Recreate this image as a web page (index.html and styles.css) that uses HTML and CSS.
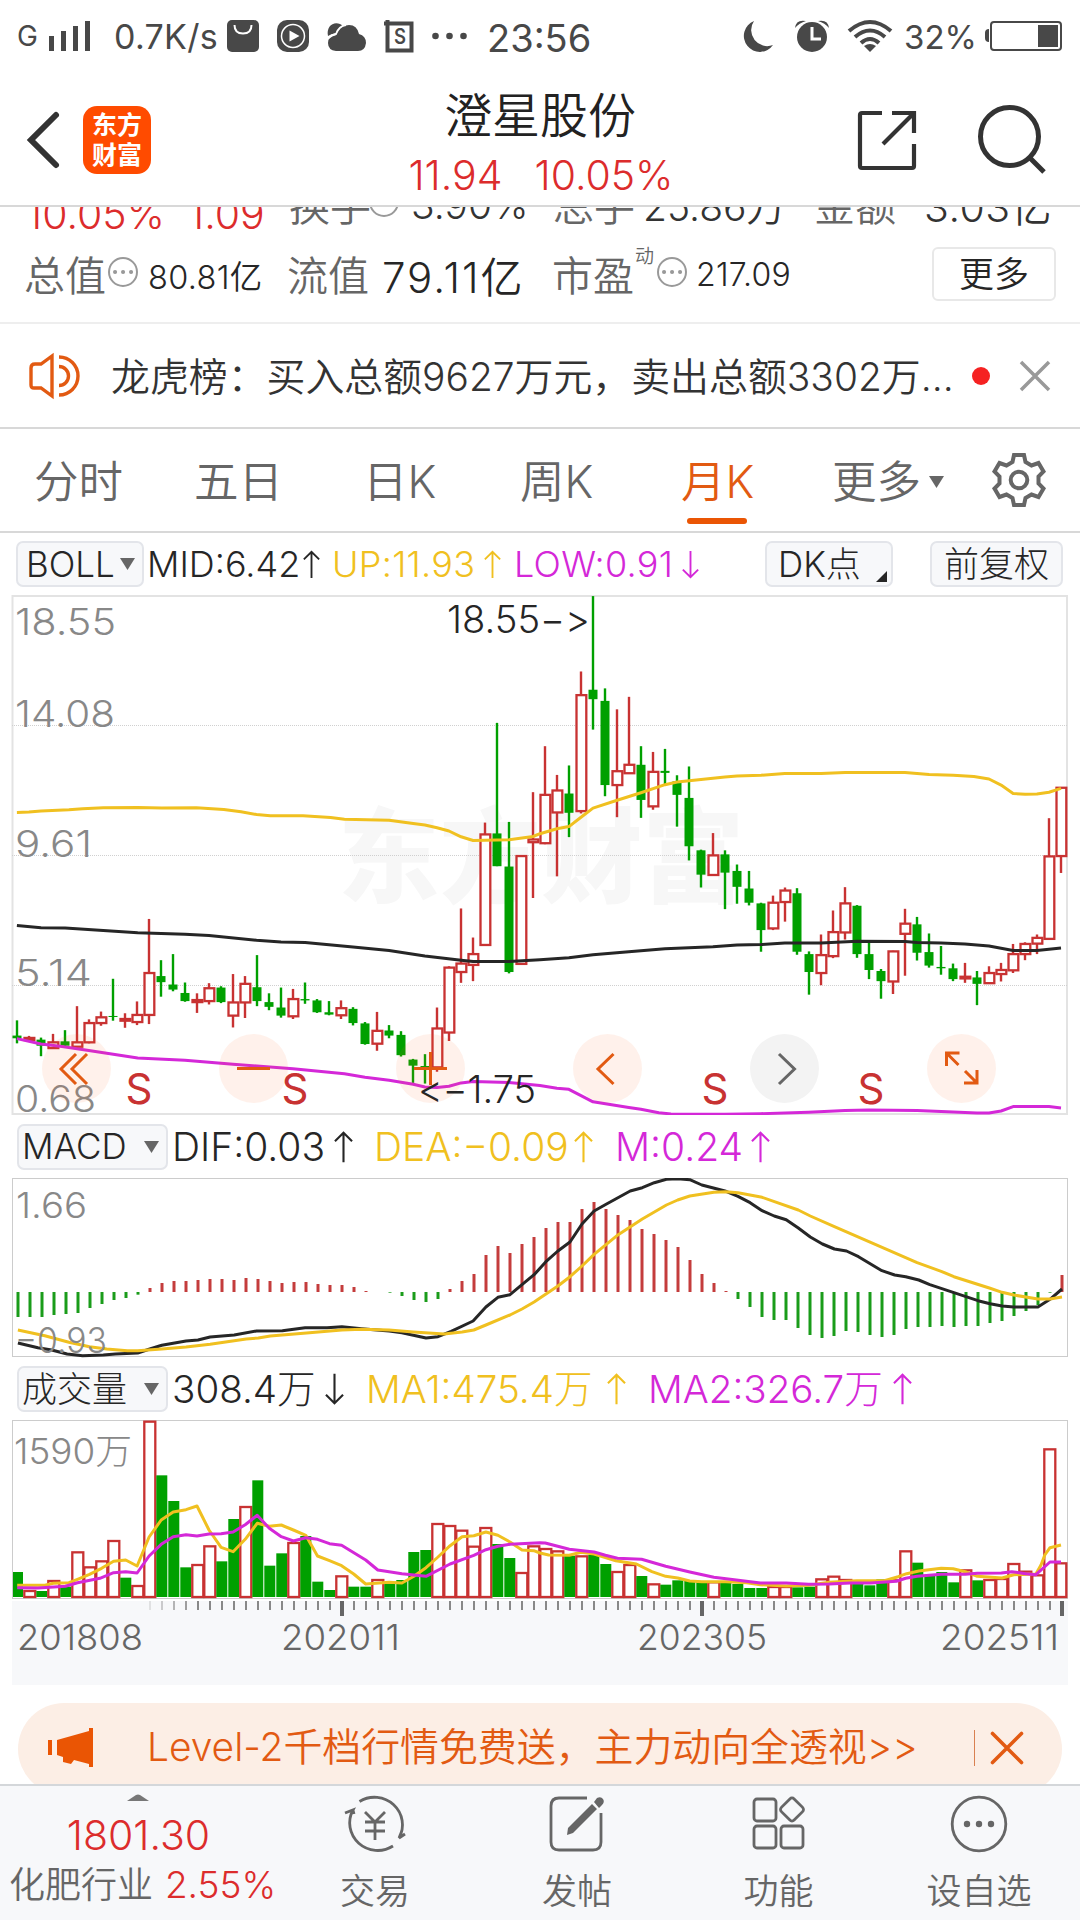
FILE: index.html
```html
<!DOCTYPE html>
<html lang="zh-CN">
<head>
<meta charset="utf-8">
<title>澄星股份</title>
<link rel="stylesheet" href="styles.css">
</head>
<body>
<div class="screen">
  <div class="status">
    <span class="carrier">G</span>
    <svg width="44" height="32" viewBox="48 20 44 32"><path class="ink" d="M49 36h5v15h-5zM61 31h5v20h-5zM73 26h5v25h-5zM85 21h5v30h-5z"/></svg>
    <span class="speed">0.7K/s</span>
    <svg width="32" height="32" viewBox="0 0 32 32"><rect class="ink" width="32" height="32" rx="5"/><path d="M7.500 5q0 8.500 8.500 8.500t8.500-8.500" fill="none" stroke="#fff" stroke-width="2"/></svg>
    <svg width="32" height="32" viewBox="0 0 32 32"><rect class="ink" width="32" height="32" rx="10"/><circle cx="16" cy="16" r="11.500" fill="none" stroke="#fff" stroke-width="1.500"/><path d="M12.500 10.500v11l10-5.500z" fill="#fff"/></svg>
    <svg width="40" height="32" viewBox="0 0 40 32"><path class="ink" d="M1 16C-1 7 6 1 13 4q2 1 3 2-5 2-7 7-5 1-8 3z"/><path class="ink" d="M9 31q-8-1-8-8 0-7 8-8 3-10 13-10 8 0 10 9 7 2 7 9-1 8-8 8z"/><path d="M1.500 18q3-3 7.500-4 3-8 10-9" fill="none" stroke="#fff" stroke-width="1.800"/></svg>
    <svg width="30" height="32" viewBox="0 0 30 32"><path d="M3.500 0v30.500h24V3.500H0" fill="none" stroke="#484848" stroke-width="4"/><text class="s-glyph" x="10" y="24" textLength="12" lengthAdjust="spacingAndGlyphs">S</text></svg>
    <svg width="36" height="32" viewBox="0 0 36 32"><g class="ink"><circle cx="3.500" cy="16" r="3.300"/><circle cx="17.500" cy="16" r="3.300"/><circle cx="31.500" cy="16" r="3.300"/></g></svg>
    <span class="clock">23:56</span>
    <svg width="32" height="32" viewBox="0 0 32 32"><path class="ink" d="M11 1A16 16 0 1 0 30 25 16 16 0 0 1 11 1z"/></svg>
    <svg width="34" height="32" viewBox="0 0 34 32"><circle class="ink" cx="17" cy="17" r="15"/><path d="M17 7v12h9" fill="none" stroke="#fff" stroke-width="3"/><path class="ink" d="M0 8Q1-1 11 1 4 3 0 8zM34 8Q33-1 23 1q7 2 11 7z"/></svg>
    <svg width="44" height="32" viewBox="0 0 44 32"><g fill="none" stroke="#484848" stroke-width="4"><path d="M1 11Q22-7 43 11M7 17q15-13 30 0M13 23q9-8 18 0"/></g><path class="ink" d="M22 32l-6-6q6-4 12 0z"/></svg>
    <span class="percent">32%</span>
    <svg width="77" height="32" viewBox="0 0 77 32"><rect x="6" y="2" width="70" height="28" rx="3" fill="none" stroke="#484848" stroke-width="2"/><path class="ink" d="M53 5h20v22H53zM4 9v13q-4 0-4-4v-5q0-4 4-4z"/></svg>
  </div>

  <div class="header">
    <svg width="34" height="56" viewBox="0 0 34 56"><path d="M29 3L4 28l25 25" fill="none" stroke="#333" stroke-width="6" stroke-linecap="round"/></svg>
    <div class="logo"><span>东方</span><span>财富</span></div>
    <div class="heading">
      <div class="name">澄星股份</div>
      <div class="price"><span>11.94</span><span>10.05%</span></div>
    </div>
    <svg width="60" height="60" viewBox="0 0 60 60"><g fill="none" stroke="#333" stroke-width="4.200"><path d="M25 3H5q-2 0-2 2v51q0 2 2 2h50q2 0 2-2V34M35 3h22v20M57 3L26 34"/></g></svg>
    <svg width="70" height="70" viewBox="0 0 70 70"><circle cx="31.500" cy="31.500" r="29" fill="none" stroke="#333" stroke-width="5"/><path d="M52 53l14 14" stroke="#333" stroke-width="5"/></svg>
  </div>

  <div class="quote">
    <div class="row row-a">
      <b class="big red">10.05%</b><b class="big red">1.09</b><i>换手</i>
      <svg width="30" height="30" viewBox="0 0 30 30"><circle cx="15" cy="15" r="14" class="ring"/></svg>
      <b class="mid">3.90%</b><i>总手</i><b class="mid">25.86万</b><i>金额</i><b class="mid last">3.03亿</b>
    </div>
    <div class="row row-b">
      <i>总值</i>
      <svg width="30" height="30" viewBox="0 0 30 30"><circle cx="15" cy="15" r="14" class="ring"/><path d="M7 15h.1M15 15h.1M23 15h.1" class="ring-dots"/></svg>
      <b class="small">80.81亿</b><i>流值</i><b class="large">79.11亿</b><i>市盈</i><sup>动</sup>
      <svg width="30" height="30" viewBox="0 0 30 30"><circle cx="15" cy="15" r="14" class="ring"/><path d="M7 15h.1M15 15h.1M23 15h.1" class="ring-dots"/></svg>
      <b class="small pe">217.09</b><span class="more">更多</span>
    </div>
  </div>

  <div class="notice">
    <svg width="52" height="44" viewBox="0 0 52 44"><g fill="none" stroke="#e25a12" stroke-width="3.400"><path d="M23 2v40l-11-8H5q-3 0-3-3V14q0-4 4-4h6zM30 3a19 19 0 0 1 0 38M30 12.500a9.500 9.500 0 0 1 0 19"/></g></svg>
    <span class="notice-text">龙虎榜：买入总额9627万元，卖出总额3302万...</span>
    <span class="dot"></span>
    <svg width="30" height="30" viewBox="0 0 30 30"><path d="M1 1l28 28M29 1L1 29" stroke="#999" stroke-width="3.500"/></svg>
  </div>

  <div class="tabs">
    <span>分时</span><span>五日</span><span>日K</span><span>周K</span><span class="on">月K</span>
    <span>更多<svg class="caret" width="15" height="12" viewBox="0 0 15 12"><path d="M0 0h15L7.500 12z" fill="#666"/></svg></span>
    <svg width="52" height="54" viewBox="-26 -27 52 54"><path d="M-5-25H5l1.500 7 6 3.500 7-2.500 5 8.500-5 5v7l5 5-5 8.500-7-2.500-6 3.500L5 25H-5l-1.500-7-6-3.500-7 2.500-5-8.500 5-5v-7l-5-5 5-8.500 7 2.500 6-3.500z" fill="none" stroke="#666" stroke-width="4"/><circle r="8.300" fill="none" stroke="#666" stroke-width="4"/></svg>
  </div>

  <div class="legend boll">
    <span class="pick">BOLL<svg width="15" height="12" viewBox="0 0 15 12"><path d="M0 0h15L7.500 12z"/></svg></span>
    <span>MID:6.42</span><svg class="arr" viewBox="0 0 20 34"><path d="M10 33V2M1 11l9-9 9 9"/></svg>
    <span class="yel">UP:11.93</span><svg class="arr yel" viewBox="0 0 20 34"><path d="M10 33V2M1 11l9-9 9 9"/></svg>
    <span class="mag">LOW:0.91</span><svg class="arr mag" viewBox="0 0 20 34"><path d="M10 1v31M1 23l9 9 9-9"/></svg>
    <span class="pick dk">DK点<svg width="11" height="11" viewBox="0 0 11 11"><path class="corner" d="M11 0v11H0z"/></svg></span>
    <span class="pick fq">前复权</span>
  </div>
  <svg class="plot" id="kline" width="1080" height="520" viewBox="0 595 1080 520"></svg>

  <div class="legend sub macd">
    <span class="pick">MACD<svg width="15" height="12" viewBox="0 0 15 12"><path d="M0 0h15L7.500 12z"/></svg></span>
    <span>DIF:0.03</span><svg class="arr" viewBox="0 0 20 34"><path d="M10 33V2M1 11l9-9 9 9"/></svg>
    <span class="yel">DEA:−0.09</span><svg class="arr yel" viewBox="0 0 20 34"><path d="M10 33V2M1 11l9-9 9 9"/></svg>
    <span class="mag">M:0.24</span><svg class="arr mag" viewBox="0 0 20 34"><path d="M10 33V2M1 11l9-9 9 9"/></svg>
  </div>
  <svg class="plot" id="macd" width="1080" height="180" viewBox="0 1178 1080 180"></svg>

  <div class="legend sub vol">
    <span class="pick">成交量<svg width="15" height="12" viewBox="0 0 15 12"><path d="M0 0h15L7.500 12z"/></svg></span>
    <span>308.4万</span><svg class="arr" viewBox="0 0 20 34"><path d="M10 1v31M1 23l9 9 9-9"/></svg>
    <span class="yel">MA1:475.4万</span><svg class="arr yel" viewBox="0 0 20 34"><path d="M10 33V2M1 11l9-9 9 9"/></svg>
    <span class="mag">MA2:326.7万</span><svg class="arr mag" viewBox="0 0 20 34"><path d="M10 33V2M1 11l9-9 9 9"/></svg>
  </div>
  <svg class="plot" id="volume" width="1080" height="265" viewBox="0 1420 1080 265"></svg>

  <div class="promo-wrap">
    <div class="promo">
      <svg width="46" height="40" viewBox="0 0 46 40"><path d="M0 12h4v15H0zM9 12l32-9V0h4v39h-4v-3l-15-4-3 4-8-2v-5l-6-2z" fill="#ea5504"/></svg>
      <span>Level-2千档行情免费送，主力动向全透视&gt;&gt;</span>
      <em></em>
      <svg width="32" height="32" viewBox="0 0 32 32"><path d="M1.500 1.500l29 29M30.500 1.500l-29 29" stroke="#e25a12" stroke-width="3.600" stroke-linecap="round"/></svg>
    </div>
  </div>

  <div class="dock">
    <div class="industry">
      <svg width="22" height="7" viewBox="0 0 22 7"><path d="M0 7l9-6q2-1 4 0l9 6z" fill="#777"/></svg>
      <div class="index">1801.30</div>
      <div class="sector"><span>化肥行业</span><b>2.55%</b></div>
    </div>
    <div class="item"><svg width="66" height="60" viewBox="-33 -30 66 60"><g class="line"><path d="M-15.500-22.500A28 27.500 0 0 1 24 14l6-4M18 22A28 27.500 0 0 1-22-14l-8 3M-22-14l1 4M24 14l2-5M-10-12L0-2 10-12M-10-2h20M-10 7h20M0-2v18"/></g></svg><span>交易</span></div>
    <div class="item"><svg width="56" height="60" viewBox="0 0 56 60"><g class="line"><path d="M38 4H10q-8 0-8 8v36q0 8 8 8h34q8 0 8-8V19"/></g><path d="M19 34l24-24 5 5-24 24-6 2zM45 8l3-4q4-2 6 1t-1 6l-3 3z" fill="#666"/></svg><span>发帖</span></div>
    <div class="item"><svg width="56" height="60" viewBox="0 0 56 60"><g class="line"><rect x="3" y="5" width="22" height="22" rx="3"/><rect x="3" y="32" width="22" height="22" rx="3"/><rect x="30" y="32" width="22" height="22" rx="3"/><rect x="32" y="6.500" width="18" height="18" rx="3" transform="rotate(45 41 15.500)"/></g></svg><span>功能</span></div>
    <div class="item"><svg width="60" height="60" viewBox="-30 -30 60 60"><circle class="line" r="26.800"/><g fill="#666"><circle cx="-12" r="3.200"/><circle r="3.200"/><circle cx="12" r="3.200"/></g></svg><span>设自选</span></div>
  </div>
</div>
<script src="chart.js"></script>
</body>
</html>
```
FILE: styles.css
```css
* { box-sizing: border-box; }
body { margin: 0; background: #fff; }
.screen {
  width: 1080px; height: 1920px; overflow: hidden; background: #fff; color: #262626;
  display: flex; flex-direction: column;
  font-family: Inter, "Noto Sans CJK SC", sans-serif; font-weight: 350; white-space: nowrap;
}
.screen > * { flex: none; }
svg { display: block; overflow: visible; flex: none; }
b, i, em { font-weight: inherit; font-style: normal; }
.red { color: #dc2c2c; }

.status {
  height: 72px; padding-left: 17px; display: grid; align-items: center; color: #484848; font-weight: 400;
  grid-template-columns: 31px 66px 113px 50px 50px 57px 48px 55px 256px 52px 53px 56px 81px 77px;
}
.status span { line-height: 40px; }
.ink { fill: #484848; }
.carrier { font-size: 28px; }
.speed { font-size: 34px; padding-top: 2px; letter-spacing: .3px; }
.clock { font-size: 38px; padding-top: 3px; }
.percent { font-size: 33px; padding-top: 2px; }
.s-glyph { font: 600 21px Inter, sans-serif; fill: #484848; }

.header {
  height: 135px; padding-left: 27px; border-bottom: 2px solid #d8d8d8; display: grid;
  grid-template-columns: 56px 262px 512px 121px 102px; align-items: center;
}
.header > svg { margin-top: 1px; }
.logo {
  width: 68px; height: 68px; border-radius: 14px; background: #ff4b00; color: #fff; font-weight: 700;
  font-size: 25px; line-height: 30px; display: flex; flex-direction: column; align-items: center; justify-content: center;
  margin-top: 1px;
}
.heading { width: 390px; height: 134px; display: flex; flex-direction: column; align-items: center; }
.name { font-size: 48px; line-height: 60px; margin-top: 14px; color: #222; }
.price { display: flex; gap: 32px; font-size: 41px; line-height: 50px; margin-top: 4px; color: #dc2c2c; font-weight: 300; margin-left: 2px; }

.quote { height: 117px; overflow: hidden; border-bottom: 2px solid #eee; }
.row { display: grid; align-items: center; }
.row i { color: #666; font-size: 41px; line-height: 50px; }
.row-a { grid-template-columns: 162px 101px 80px 42px 142px 90px 171px 110px 134px; height: 50px; margin-top: -34px; padding-left: 26px; }
.row-a .big { font-size: 41px; padding-top: 16px; font-weight: 300; }
.row-a .mid { font-size: 39px; color: #333; margin-top: -4px; }
.row-a .last { font-size: 41px; letter-spacing: .5px; }
.row-a svg { margin-top: -8px; }
.row-b { grid-template-columns: 84px 40px 139px 95px 170px 83px 22px 39px 236px 124px; height: 54px; margin-top: 20px; padding-left: 24px; }
.row-b .small { font-size: 32.500px; letter-spacing: .3px; padding-top: 1px; }
.row-b .pe { font-size: 32px; }
.row-b .large { font-size: 42px; letter-spacing: 2px; padding-top: 1px; }
.row-b i { padding-top: 3px; }
.row-b svg { margin-top: -4px; }
.row-b sup { font-size: 19px; line-height: 20px; align-self: start; color: #666; margin-top: 4px; }
.ring { fill: none; stroke: #999; stroke-width: 2; }
.ring-dots { stroke: #999; stroke-width: 4; stroke-linecap: round; }
.more { height: 54px; line-height: 50px; border: 2px solid #e8e8e8; border-radius: 6px; text-align: center; font-size: 35px; }

.notice {
  height: 105px; padding-left: 29px; border-bottom: 2px solid #d8d8d8; display: grid; align-items: center;
  grid-template-columns: 82px 861px 48px 30px; color: #333;
}
.notice-text { font-size: 38.900px; margin-top: -4px; }
.dot { width: 18px; height: 18px; border-radius: 9px; background: #f52222; }

.tabs {
  height: 104px; padding-left: 34px; border-bottom: 2px solid #d8d8d8; display: grid; align-items: center;
  grid-template-columns: 160px 169px 157px 161px 151px 161px 52px; color: #666; font-size: 44.500px;
}
.tabs > span { height: 102px; line-height: 106px; position: relative; }
.tabs .caret { display: inline-block; margin-left: 8px; vertical-align: 10px; }
.tabs .on { color: #e25a12; }
.tabs .on::after { content: ""; position: absolute; left: 6px; bottom: 7px; width: 60px; height: 6px; border-radius: 3px; background: #ea5504; }

.legend { height: 62px; display: grid; align-items: center; font-size: 36px; line-height: 46px; font-weight: 300; }
.legend > span:not(.pick) { margin-left: -2px; }
.boll { grid-template-columns: 133px 154px 31px 150px 32px 166px 83px 165px 133px; padding-left: 16px; }
.boll .mag, .boll .yel { letter-spacing: .3px; }
.sub { height: 63px; font-size: 39px; grid-template-columns: 157px 160px 42px 198px 43px 134px 30px; padding-left: 17px; }
.vol { height: 62px; grid-template-columns: 157px 151px 43px 239px 43px 243px 30px; font-size: 38.600px; }
.pick {
  width: 128px; height: 46px; line-height: 43px; padding-left: 8px; border: 2px solid #e3e5ea; border-radius: 7px;
  background: #f7f8fa; display: flex; align-items: center; font-size: 35px;
}
.pick svg { fill: #666; margin-left: auto; margin-right: 7px; }
.sub .pick { width: 151px; padding-left: 3px; }
.dk { padding-left: 11px; }
.dk svg { margin: 25px 4px 0 auto; }
.corner { fill: #262626; }
.fq { width: 133px; padding: 0; justify-content: center; }
.arr { width: 19px; height: 34px; fill: none; stroke: #262626; stroke-width: 2.2; }
.boll .arr { width: 17px; height: 31px; }
.yel { color: #f0c020; }
.mag { color: #d428d8; }
.arr.yel { stroke: #f0c020; }
.arr.mag { stroke: #d428d8; }

.plot { overflow: hidden; font-family: Inter, "Noto Sans CJK SC", sans-serif; font-weight: 300; }
.frame { fill: none; stroke: #ccc; }
.frame.soft { stroke: #e3e3e3; stroke-width: 2; }
.grid { stroke: #d0d0d0; stroke-dasharray: 1 1; }
.up { fill: #fff; stroke: #c83232; stroke-width: 2.3; }
.up-wick { stroke: #c83232; stroke-width: 2.4; }
.down { fill: #00a000; }
.down-wick { stroke: #00a000; stroke-width: 2.4; }
.curve { fill: none; stroke-width: 3; stroke-linejoin: round; }
.c-dark { stroke: #262626; }
.c-yel { stroke: #f0c020; }
.c-mag { stroke: #d428d8; }
.scale { fill: #888; font-size: 37px; }
.scale.low { font-size: 35px; }
.note { fill: #262626; font-size: 38px; font-feature-settings: "calt" 0; }
.month { fill: #666; font-size: 35px; }
.watermark { fill: #f7f7f7; font-size: 103px; font-weight: 900; }
.sell { fill: #c83232; font-size: 42px; font-weight: 400; text-anchor: middle; }
.knob { fill: rgba(255, 100, 30, .09); }
.knob.off { fill: #f3f3f3; }
.glyph { fill: none; stroke: #e25a12; stroke-width: 3; }
.glyph.off { stroke: #666; }
.axis { fill: #f7f8fa; }
.tick { stroke: #888; stroke-width: 2; }
.tick.major { stroke: #666; stroke-width: 4; }

.promo-wrap { height: 99px; padding: 18px 18px 0; overflow: hidden; }
.promo {
  height: 92px; border-radius: 46px; background: #fceee5; color: #e25a12; display: grid; align-items: center;
  grid-template-columns: 99px 827px 17px 32px; padding-left: 30px; font-size: 38.900px;
}
.promo span { margin-top: -10px; }
.promo svg, .promo em { margin-top: -2px; }
.promo em { width: 1px; height: 36px; background: #d98050; }

.dock { height: 136px; border-top: 2px solid #d4d7da; background: #f7f8fa; display: grid; grid-template-columns: 275px 200px 204px 199px 202px; color: #666; }
.industry { display: flex; flex-direction: column; align-items: center; padding-top: 8px; color: #dc2c2c; }
.index { font-size: 41px; line-height: 50px; margin-top: 9px; margin-left: 2px; font-weight: 300; }
.sector { display: flex; gap: 12px; font-size: 36px; line-height: 50px; margin-left: 10px; }
.sector span { color: #666; }
.sector b { font-size: 37px; font-weight: 300; }
.item { display: flex; flex-direction: column; align-items: center; padding-top: 8px; font-size: 35px; line-height: 50px; }
.item span { margin-top: 12px; }
.line { fill: none; stroke: #666; stroke-width: 2.8; }
```
FILE: chart.js
```js
// Monthly bars, 201808 to 202511. Vertical values are in plot sub-units, converted by each panel's scale.
const x = i => 17 + 12 * i;

// direction, high, body top, body bottom, low
const candles = `g1273,1318,1326,1341 r1319,1325,1331,1333 g1324,1330,1348,1379 r1313,1338,1355,1357 g1302,1335,1348,1352
r1231,1338,1351,1355 r1270,1281,1338,1341 r1247,1264,1281,1289 g1150,1260,1263,1274 r1252,1269,1274,1295 r1217,1257,1278,1287
r973,1133,1257,1284 g1095,1142,1160,1203 g1077,1167,1182,1187 g1161,1192,1216,1218 r1193,1213,1219,1251 r1163,1178,1216,1226
g1172,1176,1219,1222 r1136,1220,1259,1294 r1142,1165,1220,1266 g1080,1175,1216,1231 g1193,1219,1233,1243 g1176,1235,1259,1265
r1180,1210,1261,1269 g1161,1210,1214,1224 g1210,1214,1249,1251 g1216,1249,1256,1258 r1214,1237,1258,1269 g1234,1239,1281,1288
g1278,1282,1343,1345 r1248,1304,1342,1363 g1287,1303,1318,1326 g1305,1316,1376,1380 g1387,1389,1407,1458 g1373,1408,1412,1460
r1235,1297,1412,1425 r1113,1117,1309,1334 r942,1105,1130,1162 r1028,1077,1109,1157 r688,723,1050,1053 g393,720,817,817
g686,818,1130,1134 r785,787,1106,1109 r598,738,746,911 r462,606,749,752 r547,593,658,847 g519,602,659,731 r241,311,654,661
g18,295,323,413 g291,328,577,610 r353,536,577,672 r316,517,542,544 g462,517,621,674 r479,538,640,650 g470,535,541,574
g548,566,606,700 g522,615,758,800 g768,770,842,880 r719,785,843,846 g770,782,836,944 g812,831,878,928 g831,883,925,933
g925,927,1006,1070 r904,925,1001,1006 r880,889,923,981 g882,897,1070,1079 g1069,1077,1130,1197 r1019,1080,1133,1169
r948,1012,1083,1089 r879,927,1013,1034 g932,934,1077,1088 g1041,1077,1124,1151 g1121,1127,1157,1209 r1067,1069,1158,1195
r943,987,1017,1141 g967,989,1073,1096 g1016,1071,1111,1117 g1053,1115,1119,1138 g1105,1119,1151,1157 r1103,1144,1149,1162
g1127,1146,1165,1228 r1113,1133,1163,1165 r1103,1124,1136,1158 r1047,1077,1125,1133 r1042,1047,1077,1095 r1019,1029,1046,1077
r675,788,1032,1034 r583,585,787,837`.split(/\s+/);

const bars = [621,621,621,615,612,609,594,582,570,564,554,534,519,513,513,510,507,507,510,504,507,513,519,516,516,522,525,525,531,543,
546,548,558,570,576,567,537,513,492,435,408,429,402,381,354,336,336,297,276,297,315,330,357,372,390,411,450,492,519,543,567,591,621,630,
630,654,675,684,678,663,666,675,681,675,657,651,651,648,651,648,648,639,633,618,603,585,548,495];

const volumes = `g546 r600 g603 r570 g590 r484 r529 r511 r450 g563 r585 r92 g256 g333 g532 r522 r466 g514 g387 r348 g271 g527 g490 r456
g438 g575 g600 r556 g590 g590 r567 g582 g570 g486 g480 r399 r405 r419 r467 r411 g462 g504 r546 r466 r474 r481 g497 r496 g495 g522 r543
r522 g558 r580 g584 g571 g572 g576 r574 g576 g582 g594 g594 r588 r588 g592 g590 r565 r557 r567 g582 g586 g568 r568 r481 g518 g558 g546
g577 r538 g571 r567 r564 r519 r542 r553 r175 r517`.split(/\s+/);

// Each curve has two halves: the second starts at the middle of the panel.
const curve = (left, right, y, cls) => {
  const pts = (s, off) => s.split(' ').map(p => { const [a, b] = p.split(',').map(Number); return (a / 2.904 + off).toFixed(1) + ',' + y(b).toFixed(1); });
  return `<polyline class="curve ${cls}" points="${[...pts(left, 0), ...pts(right, 540)].join(' ')}"/>`;
};
const text = (cls, tx, ty, s, w) => `<text class="${cls}" x="${tx}" y="${ty}"${w ? ` textLength="${w}" lengthAdjust="spacingAndGlyphs"` : ''}>${s}</text>`;

const yk = v => 590 + v / 2.958;
let k = text('watermark', 338, 895, '东方财富', 406);
k += '<rect class="frame soft" x="12.500" y="596" width="1054.500" height="518"/>';
[725.5, 855.5, 985.5].forEach(y => { k += `<line class="grid" x1="12" x2="1067" y1="${y}" y2="${y}"/>`; });
k += text('scale', 15, 635, '18.55', 101) + text('scale', 15, 727, '14.08', 100) + text('scale', 15, 857, '9.61', 77)
   + text('scale', 15, 986, '5.14', 77) + text('scale', 15, 1112, '0.68', 81);
candles.forEach((c, i) => {
  const [h, t, b, l] = c.slice(1).split(',').map(v => yk(+v));
  if (c[0] === 'g') {
    k += `<line class="down-wick" x1="${x(i)}" x2="${x(i)}" y1="${h}" y2="${l}"/><rect class="down" x="${x(i) - 4.5}" y="${t}" width="9" height="${b - t}"/>`;
  } else {
    k += `<line class="up-wick" x1="${x(i)}" x2="${x(i)}" y1="${h}" y2="${l}"/><rect class="up" x="${x(i) - 4.5}" y="${t}" width="9.800" height="${b - t}"/>`;
  }
});
k += curve('49,658 84,657 119,654 200,650 240,647 300,644 400,643 470,645 570,644 650,649 700,656 745,664 785,668 880,668 960,673 1000,678 1130,681 1200,691 1234,695 1269,703 1304,713 1339,730 1374,741 1478,739 1548,729',
  '0,721 49,706 84,700 119,672 154,645 224,622 293,600 363,576 398,568 433,564 537,553 572,550 642,548 711,543 816,543 886,540 1060,540 1130,546 1200,548 1260,552 1304,559 1339,577 1374,602 1409,604 1443,603 1478,598 1513,587', yk, 'c-yel');
k += curve('49,992 119,999 189,1000 400,1014 537,1018 607,1022 745,1036 816,1041 886,1043 1025,1056 1130,1066 1234,1083 1339,1095 1374,1099 1478,1099 1568,1094',
  '84,1088 154,1079 258,1070 363,1061 502,1055 572,1050 642,1049 711,1044 816,1044 921,1039 1060,1040 1095,1043 1165,1044 1234,1047 1304,1053 1374,1066 1443,1066 1513,1059', yk, 'c-dark');
k += curve('49,1327 119,1343 180,1350 258,1362 400,1384 537,1391 677,1403 746,1408 851,1416 1000,1431 1060,1441 1130,1450 1200,1462 1234,1470 1269,1472 1304,1468 1339,1458 1374,1454 1478,1457 1568,1466',
  '49,1474 84,1477 119,1496 154,1514 258,1531 293,1536 345,1546 380,1550 537,1551 640,1549 780,1545 886,1540 955,1538 1095,1540 1200,1544 1269,1547 1304,1547 1339,1541 1374,1528 1478,1528 1513,1532', yk, 'c-mag');
[76.5, 253.5, 430.5, 607.5, 784.5, 961.5].forEach((cx, i) => { k += `<circle class="knob${i === 4 ? ' off' : ''}" cx="${cx}" cy="1068.500" r="34.500"/>`; });
k += `<path class="glyph" d="M76 1054l-15 15 15 15M87 1054l-15 15 15 15M237 1068.500h33M414 1068.500h33M430.500 1052v33"/>
<path class="glyph" d="M613.500 1054l-15.500 15 15.500 15"/><path class="glyph off" d="M779 1054l15.500 15-15.500 15"/>
<path class="glyph" d="M946.500 1066v-13h13M946.500 1053l12 12M977 1070v13h-13M977 1083l-12-12"/>`;
[139, 295, 715, 871].forEach(sx => { k += text('sell', sx, 1104, 'S'); });
k += text('note', 447, 633, '18.55−&gt;', 143) + text('note', 418, 1103, '&lt;−1.75', 118);
document.getElementById('kline').innerHTML = k;

const ym = v => 1110 + v / 3;
let m = '<rect class="frame" x="12.500" y="1178.500" width="1055" height="178"/>';
m += text('scale low', 16, 1218, '1.66', 71);
bars.forEach((v, i) => {
  if (v !== 546) m += `<rect fill="${v > 546 ? '#1a9c1a' : '#c43c3c'}" x="${x(i) - .5}" y="${ym(Math.min(v, 546))}" width="3" height="${Math.abs(v - 546) / 3}"/>`;
});
m += curve('52,699 110,713 150,720 195,732 240,737 300,735 335,732 400,729 435,717 470,706 540,693 575,690 610,681 680,675 745,663 820,662 886,653 950,653 993,650 1050,656 1130,663 1167,668 1237,684 1272,680 1310,664 1374,633 1411,591 1446,562 1481,554 1516,524 1551,494',
  '0,475 17,455 52,423 87,396 122,342 157,303 192,283 262,243 297,233 332,218 367,208 400,206 435,209 470,225 540,244 575,259 610,278 645,302 680,318 715,329 750,354 785,381 820,402 855,417 890,423 925,440 993,482 1030,495 1062,500 1100,510 1132,524 1202,548 1272,572 1307,581 1342,588 1376,591 1446,591 1481,568 1516,537', ym, 'c-dark');
m += curve('52,660 130,677 200,697 260,710 310,717 370,722 400,722 470,717 540,711 610,703 715,687 750,684 785,678 890,669 993,660 1050,658 1130,660 1200,666 1290,672 1342,666 1376,660 1411,645 1481,615 1516,597 1551,576',
  '0,564 52,528 87,500 122,468 157,433 227,374 297,327 367,285 400,270 435,258 505,247 540,245 575,248 645,262 750,300 785,318 855,350 955,395 1000,415 1095,458 1165,484 1202,500 1307,535 1342,547 1376,555 1446,567 1481,567 1516,561', ym, 'c-yel');
m += text('scale low', 15, 1353, '−0.93', 92);
document.getElementById('macd').innerHTML = m;

const yv = v => 1390 + v / 3;
let q = '<rect class="axis" x="12" y="1601" width="1056" height="84"/><rect class="frame" x="12.500" y="1420.500" width="1055" height="178"/>';
q += text('scale low', 14, 1464, '1590万', 118);
volumes.forEach((v, i) => {
  const top = yv(+v.slice(1)), cx = x(i) + .8;
  q += v[0] === 'g'
    ? `<rect class="down" x="${Math.max(13, cx - 5.5)}" y="${top}" width="${i ? 11 : 10}" height="${1597 - top}"/>`
    : `<rect class="up" x="${cx - 5.5}" y="${top + 1}" width="${i === 87 ? 10 : 11}" height="${1596 - top}"/>`;
});
q += curve('50,586 130,586 155,580 200,578 225,568 260,553 295,535 330,514 365,510 398,528 433,441 468,390 503,366 540,359 572,348 607,420 642,472 677,485 712,448 747,400 782,409 817,405 852,420 888,436 922,498 957,512 992,527 1027,552 1062,582 1130,577 1167,579 1202,559 1237,533 1272,501 1307,467 1342,440 1376,437 1411,426 1446,436 1481,456 1516,480 1550,482',
  '0,489 25,495 85,496 119,487 157,492 220,512 280,522 325,545 365,559 400,564 435,573 470,575 540,575 600,578 640,584 715,588 780,586 840,577 920,572 1000,572 1040,560 1065,551 1100,543 1165,535 1200,536 1235,545 1270,559 1342,564 1376,554 1440,552 1455,525 1466,495 1481,473 1513,465', yv, 'c-yel');
q += curve('50,593 110,594 190,589 225,578 290,565 330,548 365,545 398,549 433,498 468,463 503,440 540,434 572,438 607,432 642,431 677,426 712,404 747,376 782,415 817,440 852,453 888,443 922,448 957,461 992,466 1062,510 1097,540 1130,545 1167,551 1237,559 1307,522 1376,496 1411,479 1446,469 1481,463',
  '0,458 15,459 85,478 157,486 190,496 225,505 295,508 365,529 435,546 505,562 570,570 640,579 715,579 780,583 840,582 900,579 960,579 1035,574 1062,565 1095,559 1165,553 1235,553 1270,550 1340,549 1370,545 1410,551 1440,554 1481,516 1513,516', yv, 'c-mag');
for (let i = 11; i < 88; i++) {
  const major = i % 30 === 27;
  q += `<line class="tick${major ? ' major' : ''}" opacity="${Math.min(1, (i - 10) / 5)}" x1="${x(i) + 1}" x2="${x(i) + 1}" y1="1601" y2="${major ? 1616 : 1610}"/>`;
}
q += text('month', 17, 1650, '201808', 126) + text('month', 281, 1650, '202011', 119)
   + text('month', 637, 1650, '202305', 130) + text('month', 940, 1650, '202511', 119);
document.getElementById('volume').innerHTML = q;
```
